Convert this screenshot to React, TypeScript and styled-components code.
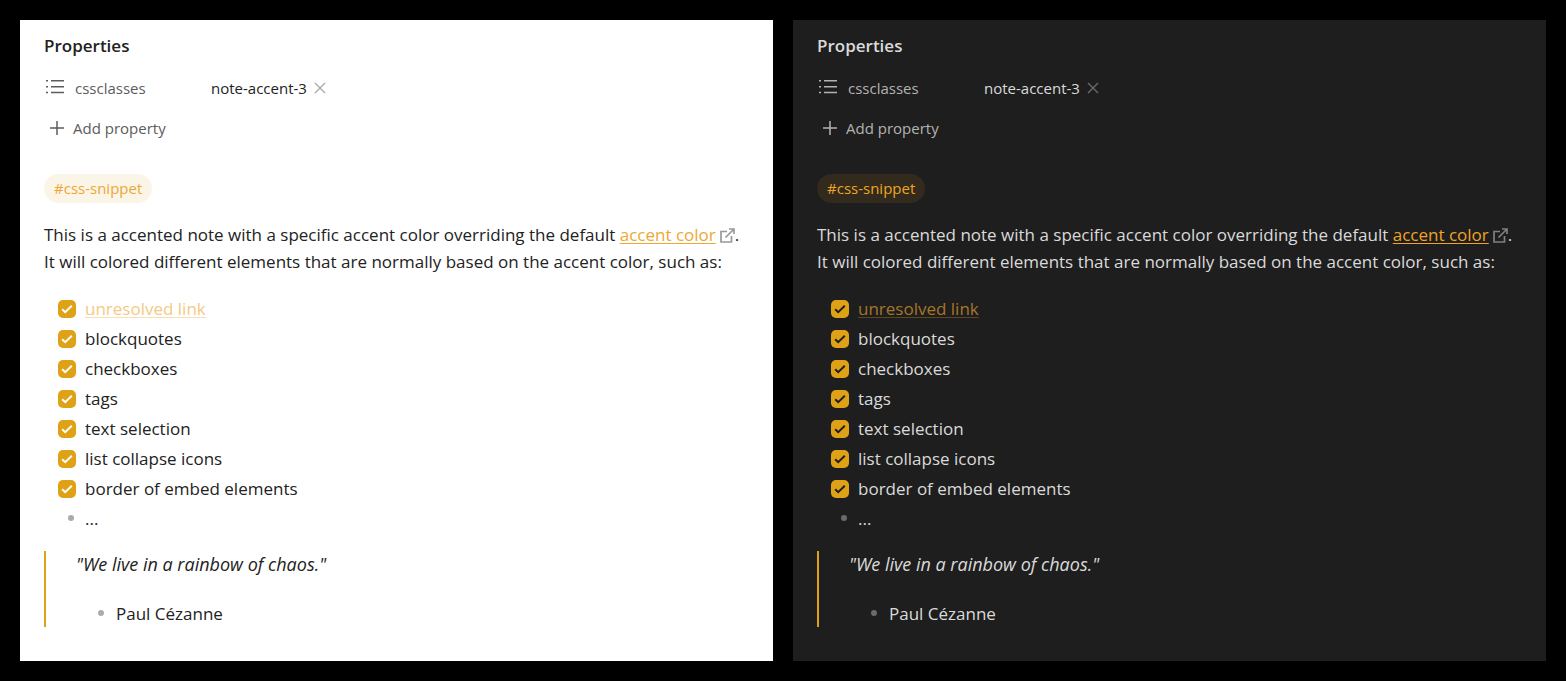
import React from "react";
import styled, { ThemeProvider, createGlobalStyle, css } from "styled-components";

interface NoteTheme {
  background: string;
  text: string;
  muted: string;
  faint: string;
  linkIcon: string;
  accentText: string;
  tagBackground: string;
  unresolved: string;
  unresolvedLine: string;
  checkMark: string;
}

const accent = "#dfa217";

const light: NoteTheme = {
  background: "#ffffff",
  text: "#222222",
  muted: "#5c5c5c",
  faint: "#ababab",
  linkIcon: "#999999",
  accentText: "#eda833",
  tagBackground: "#fbf5e7",
  unresolved: "#f4ca84",
  unresolvedLine: "#f7e0b4",
  checkMark: "#ffffff",
};

const dark: NoteTheme = {
  background: "#1e1e1e",
  text: "#dadada",
  muted: "#b3b3b3",
  faint: "#6b6b6b",
  linkIcon: "#808080",
  accentText: "#f0a424",
  tagBackground: "#312a1d",
  unresolved: "#a5762a",
  unresolvedLine: "#5c4724",
  checkMark: "#1e1e1e",
};

const themed = (key: keyof NoteTheme) => ({ theme }: { theme: any }) => theme[key];

const GlobalStyle = createGlobalStyle`
  *, *::before, *::after { box-sizing: border-box; }
  body {
    margin: 0;
    background: #000000;
    font-family: "Open Sans", "Noto Sans", sans-serif;
  }
  h2, p, ul, blockquote { margin: 0; padding: 0; }
  ul { list-style: none; }
`;

const Page = styled.main`
  display: grid;
  grid-template-columns: repeat(2, minmax(0, 1fr));
  gap: 20px;
  padding: 20px;
`;

const Note = styled.article`
  padding: 14px 24px 34px;
  background: ${themed("background")};
  color: ${themed("text")};
  font-size: 17px;
  line-height: 27px;
`;

const PropertiesTitle = styled.h2`
  font-size: 17px;
  line-height: 24px;
  font-weight: 600;
`;

const PropertyRow = styled.div`
  display: grid;
  grid-template-columns: 167px 1fr;
  align-items: center;
  height: 32px;
  margin-top: 14px;
  font-size: 15px;
  line-height: 24px;
`;

const PropertyKey = styled.span`
  display: flex;
  align-items: center;
  gap: 9px;
  color: ${themed("muted")};
`;

const PropertyValue = styled.span`
  display: flex;
  align-items: center;
  gap: 6px;
`;

const plainButton = css`
  display: flex;
  align-items: center;
  padding: 0;
  border: 0;
  background: none;
  font: inherit;
  cursor: pointer;
`;

const RemoveButton = styled.button`
  ${plainButton}
  color: ${themed("faint")};
`;

const AddButton = styled.button`
  ${plainButton}
  gap: 7px;
  height: 32px;
  margin-top: 8px;
  padding-left: 4px;
  color: ${themed("muted")};
  font-size: 15px;
  line-height: 24px;
`;

const Tag = styled.a`
  display: block;
  width: fit-content;
  margin: 30px 0 18px;
  padding: 0 10px;
  border-radius: 15px;
  background: ${themed("tagBackground")};
  color: ${themed("accentText")};
  font-size: 15px;
  line-height: 29px;
  text-decoration: none;
`;

const ExternalLink = styled.a`
  color: ${themed("accentText")};
  text-decoration-thickness: 1px;
  text-underline-offset: 2px;

  svg {
    margin-left: 4px;
    vertical-align: -2px;
    color: ${themed("linkIcon")};
  }
`;

const UnresolvedLink = styled.a`
  color: ${themed("unresolved")};
  text-decoration-color: ${themed("unresolvedLine")};
  text-decoration-thickness: 1px;
  text-underline-offset: 2px;
`;

const TaskList = styled.ul`
  margin-top: 19px;
`;

const TaskItem = styled.li`
  display: flex;
  align-items: center;
  gap: 9px;
  height: 30px;
  padding-left: 14px;

  label { padding-bottom: 2px; }
`;

const CheckFrame = styled.span`
  display: grid;
  flex: none;
  place-items: center;
  width: 18px;
  height: 18px;

  > * { grid-area: 1 / 1; }
  svg { pointer-events: none; color: ${themed("checkMark")}; }
`;

const Checkbox = styled.input`
  appearance: none;
  width: 18px;
  height: 18px;
  margin: 0;
  border-radius: 5px;
  background: ${accent};
`;

const BulletItem = styled.li<{ $indent: number; $gap: number }>`
  display: flex;
  align-items: center;
  gap: ${({ $gap }) => $gap}px;
  height: 28px;
  padding-left: ${({ $indent }) => $indent}px;

  &::before {
    content: "";
    flex: none;
    width: 6px;
    height: 6px;
    border-radius: 50%;
    background: ${themed("faint")};
  }
`;

const Quote = styled.blockquote`
  margin-top: 19px;
  padding-left: 30px;
  border-left: 2px solid ${accent};

  em { font-size: 18px; }
  p { height: 27px; }
  ul { margin-top: 21px; }
`;

const ListIcon = () => (
  <svg width="22" height="20" viewBox="0 0 22 20" fill="none" stroke="currentColor" strokeWidth="1.5" aria-hidden="true">
    <path d="M2 2.7h2M2 8.7h2M2 14.5h2M7 2.7h13M7 8.7h13M7 14.5h13" />
  </svg>
);

const PlusIcon = () => (
  <svg width="18" height="18" viewBox="0 0 18 18" fill="none" stroke="currentColor" strokeWidth="1.5" aria-hidden="true">
    <path d="M9 2v14M2 9h14" />
  </svg>
);

const CloseIcon = () => (
  <svg width="14" height="14" viewBox="0 0 14 14" fill="none" stroke="currentColor" strokeWidth="1.4" aria-hidden="true">
    <path d="M2 2l10 10M12 2L2 12" />
  </svg>
);

const ExternalIcon = () => (
  <svg width="15" height="15" viewBox="0 0 15 15" fill="none" stroke="currentColor" strokeWidth="1.7" aria-hidden="true">
    <path d="M7 3.5H1v10.5h10.5V8M5.5 9.5L14 1M9 1h5v5" />
  </svg>
);

const CheckIcon = () => (
  <svg width="12" height="12" viewBox="0 0 12 12" fill="none" stroke="currentColor" strokeWidth="2" aria-hidden="true">
    <path d="M1.2 6.2l3 3L10.8 2.8" />
  </svg>
);

const tasks = [
  "unresolved link",
  "blockquotes",
  "checkboxes",
  "tags",
  "text selection",
  "list collapse icons",
  "border of embed elements",
];

const NotePreview = ({ name, theme }: { name: string; theme: NoteTheme }) => (
  <ThemeProvider theme={theme}>
    <Note>
      <PropertiesTitle>Properties</PropertiesTitle>
      <PropertyRow>
        <PropertyKey>
          <ListIcon />
          cssclasses
        </PropertyKey>
        <PropertyValue>
          note-accent-3
          <RemoveButton type="button" aria-label="Remove note-accent-3">
            <CloseIcon />
          </RemoveButton>
        </PropertyValue>
      </PropertyRow>
      <AddButton type="button">
        <PlusIcon />
        Add property
      </AddButton>
      <Tag href="#css-snippet">#css-snippet</Tag>
      <p>
        This is a accented note with a specific accent color overriding the default{" "}
        <ExternalLink href="#accent-color">
          accent color
          <ExternalIcon />
        </ExternalLink>
        .
        <br />
        It will colored different elements that are normally based on the accent color, such as:
      </p>
      <TaskList>
        {tasks.map((task, index) => {
          const id = `${name}-task-${index}`;
          return (
            <TaskItem key={task}>
              <CheckFrame>
                <Checkbox type="checkbox" id={id} defaultChecked />
                <CheckIcon />
              </CheckFrame>
              <label htmlFor={id}>
                {index === 0 ? <UnresolvedLink href="#unresolved">{task}</UnresolvedLink> : task}
              </label>
            </TaskItem>
          );
        })}
        <BulletItem $indent={24} $gap={11}>...</BulletItem>
      </TaskList>
      <Quote>
        <p>
          <em>"We live in a rainbow of chaos."</em>
        </p>
        <ul>
          <BulletItem $indent={22} $gap={12}>Paul Cézanne</BulletItem>
        </ul>
      </Quote>
    </Note>
  </ThemeProvider>
);

export default function App() {
  return (
    <>
      <GlobalStyle />
      <Page>
        <NotePreview name="light" theme={light} />
        <NotePreview name="dark" theme={dark} />
      </Page>
    </>
  );
}
